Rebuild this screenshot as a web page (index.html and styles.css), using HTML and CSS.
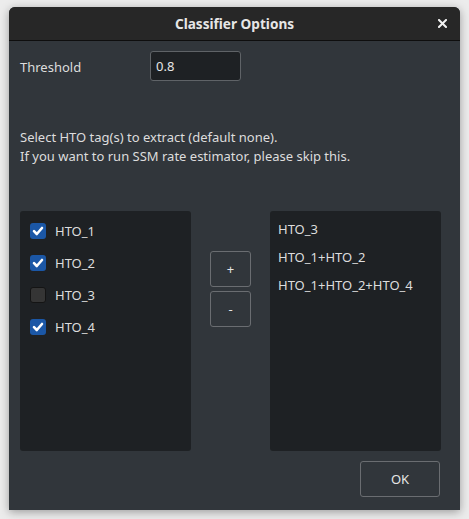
FILE: index.html
```html
<!DOCTYPE html>
<html>
<head>
<meta charset="utf-8">
<link rel="stylesheet" href="styles.css">
</head>
<body>
<div class="window">
  <div class="titlebar">
    <span class="title">Classifier Options</span>
    <span class="close" aria-label="Close">
      <svg width="9" height="9" viewBox="0 0 9 9"><path d="M1 1 L8 8 M8 1 L1 8" stroke="#f2f2f2" stroke-width="2" stroke-linecap="square"/></svg>
    </span>
  </div>
  <div class="content">
    <div class="row-threshold">
      <label class="field-label">Threshold</label>
      <div class="input">0.8</div>
    </div>
    <div class="desc">
      <div>Select HTO tag(s) to extract (default none).</div>
      <div>If you want to run SSM rate estimator, please skip this.</div>
    </div>
    <div class="lists">
      <div class="list list-left">
        <div class="check-row"><span class="cb checked"><svg width="16" height="16" viewBox="0 0 16 16"><path d="M4 8.2 L6.8 11 L12 5" fill="none" stroke="#fff" stroke-width="2.6" stroke-linecap="round" stroke-linejoin="round"/></svg></span><span>HTO_1</span></div>
        <div class="check-row"><span class="cb checked"><svg width="16" height="16" viewBox="0 0 16 16"><path d="M4 8.2 L6.8 11 L12 5" fill="none" stroke="#fff" stroke-width="2.6" stroke-linecap="round" stroke-linejoin="round"/></svg></span><span>HTO_2</span></div>
        <div class="check-row"><span class="cb"></span><span>HTO_3</span></div>
        <div class="check-row"><span class="cb checked"><svg width="16" height="16" viewBox="0 0 16 16"><path d="M4 8.2 L6.8 11 L12 5" fill="none" stroke="#fff" stroke-width="2.6" stroke-linecap="round" stroke-linejoin="round"/></svg></span><span>HTO_4</span></div>
      </div>
      <div class="btn-col">
        <button class="btn small">+</button>
        <button class="btn small">-</button>
      </div>
      <div class="list list-right">
        <div class="item">HTO_3</div>
        <div class="item">HTO_1+HTO_2</div>
        <div class="item">HTO_1+HTO_2+HTO_4</div>
      </div>
    </div>
    <div class="footer">
      <button class="btn ok">OK</button>
    </div>
  </div>
</div>
</body>
</html>
```
FILE: styles.css
```css
html, body {
  margin: 0;
  padding: 0;
}
body {
  background: #ececec;
  width: 469px;
  height: 519px;
  overflow: hidden;
  font-family: "Noto Sans", "DejaVu Sans", sans-serif;
  font-size: 13px;
  color: #dddddd;
}
.window {
  margin: 7px 0 0 9px;
  width: 451px;
  height: 503px;
  border-radius: 6px 6px 0 0;
  background: #31363b;
  box-shadow: 0 2px 10px rgba(0,0,0,0.35);
  display: flex;
  flex-direction: column;
  overflow: hidden;
}
.titlebar {
  height: 33px;
  flex: 0 0 33px;
  background: #272727;
  border-bottom: 1px solid #0e0e0e;
  display: flex;
  align-items: center;
  justify-content: center;
  position: relative;
}
.title {
  font-weight: bold;
  color: #e6e6e6;
  font-size: 13.6px;
}
.close {
  position: absolute;
  right: 13px;
  top: 12px;
  width: 9px;
  height: 9px;
  display: flex;
}
.content {
  flex: 1;
  padding: 10px 19px 0 11px;
  display: flex;
  flex-direction: column;
}
.row-threshold {
  display: flex;
  align-items: center;
  height: 30px;
}
.field-label {
  width: 130px;
  padding-top: 1px;
}
.input {
  width: 91px;
  height: 30px;
  box-sizing: border-box;
  border: 1px solid #5f6367;
  border-radius: 3px;
  background: #1e2124;
  padding: 5px 5px 0 5px;
  color: #e6e6e6;
}
.desc {
  margin-top: 47px;
  line-height: 19px;
}
.lists {
  margin-top: 45px;
  display: flex;
  gap: 19px;
  height: 240px;
}
.list {
  width: 171px;
  height: 240px;
  background: #1e2124;
  border-radius: 3px;
  box-sizing: border-box;
}
.list-left {
  padding: 4px 0 0 10px;
}
.check-row {
  height: 32px;
  display: flex;
  align-items: center;
  gap: 9px;
}
.cb {
  width: 16px;
  height: 16px;
  box-sizing: border-box;
  border-radius: 3px;
  background: #353535;
  border: 1px solid #141414;
  display: flex;
}
.cb.checked {
  background: #1b57a6;
  border: none;
}
.btn-col {
  width: 41px;
  padding-top: 40px;
  display: flex;
  flex-direction: column;
  gap: 4px;
}
.btn {
  box-sizing: border-box;
  background: #31363b;
  border: 1px solid #6a6d71;
  border-radius: 3px;
  color: #e6e6e6;
  font-family: "Noto Sans", "DejaVu Sans", sans-serif;
  font-size: 13px;
  padding: 0;
}
.btn.small {
  width: 41px;
  height: 36px;
}
.list-right {
  padding: 4px 0 0 8px;
}
.item {
  height: 28px;
  display: flex;
  align-items: center;
}
.footer {
  margin-top: 10px;
  display: flex;
  justify-content: flex-end;
  padding-right: 1px;
}
.btn.ok {
  width: 80px;
  height: 36px;
}
```
